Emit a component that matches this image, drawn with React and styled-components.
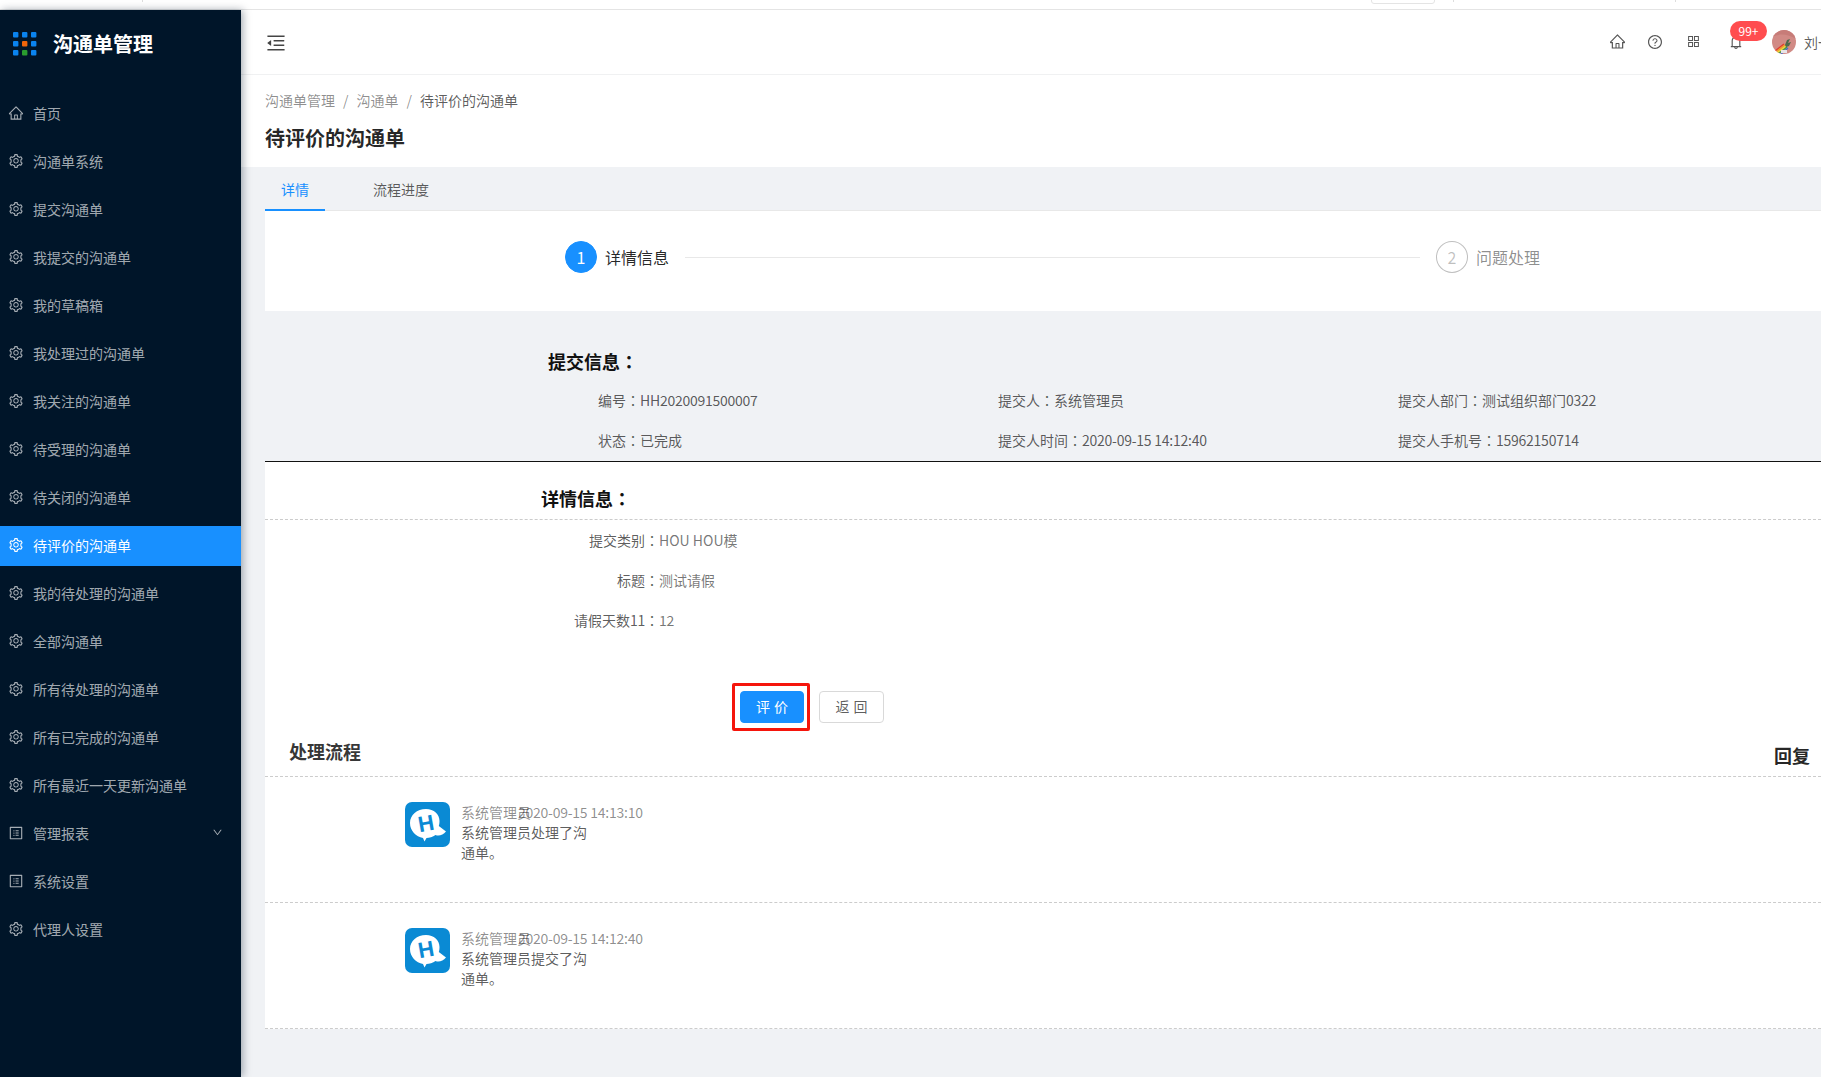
import React from 'react';
import styled, { createGlobalStyle } from 'styled-components';
import {
  AiOutlineHome, AiOutlineSetting, AiOutlineProfile, AiOutlineQuestionCircle,
  AiOutlineAppstore, AiOutlineBell, AiOutlineMenuFold, AiOutlineDown,
} from 'react-icons/ai';

const Global = createGlobalStyle`
  html, body { margin: 0; padding: 0; width: 1821px; height: 1077px; overflow: hidden; background: #f0f2f5; }
  body { font-family: "Noto Sans CJK SC", "Liberation Sans", sans-serif; font-size: 14px; color: rgba(0,0,0,.65); }
  * { box-sizing: border-box; }
`;

const Page = styled.div`
  width: 1821px; height: 1077px; display: flex; flex-direction: column; overflow: hidden;
`;
const TopStrip = styled.div`
  height: 10px; flex: none; background: #fff; border-bottom: 1px solid #e4e4e4; position: relative;
`;
const StripTick = styled.span`
  position: absolute; top: 0; left: ${p => p.$x}px; width: 1px; height: 2px; background: #ddd;
`;
const StripBox = styled.span`
  position: absolute; top: -6px; left: 1371px; width: 64px; height: 10px;
  border: 1px solid #e4e4e4; border-radius: 3px;
`;
const Body = styled.div`flex: 1; display: flex; min-height: 0;`;

const Sidebar = styled.aside`
  width: 241px; flex: none; background: #001529; box-shadow: 2px 0 8px rgba(0,21,41,.35); position: relative; z-index: 2;
`;
const Brand = styled.div`
  height: 68px; display: flex; align-items: center; gap: 16px; padding-left: 13px; margin-bottom: 16px;
`;
const BrandName = styled.div`
  font-size: 20px; font-weight: 700; color: #fff; line-height: 28px;
`;
const Menu = styled.nav`display: flex; flex-direction: column; gap: 8px;`;
const Item = styled.div`
  height: 40px; display: flex; align-items: center; padding: 0 18px 3px 8px; gap: 9px;
  color: ${p => (p.$active ? '#fff' : 'rgba(255,255,255,.65)')};
  background: ${p => (p.$active ? '#1890ff' : 'transparent')};
  font-size: 14px; svg { flex: none; }
`;
const ItemLabel = styled.span`flex: 1; white-space: nowrap;`;

const Main = styled.main`flex: 1; min-width: 0; display: flex; flex-direction: column;`;
const Header = styled.header`
  height: 65px; flex: none; background: #fff; border-bottom: 1px solid #f0f1f2;
  display: flex; align-items: center; padding-left: 24px; padding-bottom: 1px;
  color: #444;
`;
const FoldWrap = styled.span`display: flex; padding-top: 2px;`;
const HeaderTools = styled.div`
  margin-left: auto; display: flex; align-items: center; height: 100%; width: 223px; flex: none; overflow: hidden;
`;
const Tool = styled.span`
  width: ${p => p.$w || 38}px; display: flex; justify-content: center; color: #555; flex: none;
`;
const BellTool = styled(Tool)`position: relative;`;
const Badge = styled.span`
  position: absolute; left: 18px; top: -13px; height: 20px; width: 37px; border-radius: 10px;
  background: #ff4d4f; color: #fff; font-size: 12px; line-height: 20px; text-align: center;
`;
const AvatarSlot = styled.span`margin-left: 12px; display: flex; flex: none;`;
const UserName = styled.span`margin-left: 8px; white-space: nowrap; color: rgba(0,0,0,.65);`;

const PageHead = styled.div`
  height: 92px; flex: none; background: #fff; padding: 14px 0 0 24px;
`;
const Crumbs = styled.div`
  display: flex; height: 22px; line-height: 22px; color: rgba(0,0,0,.45);
`;
const CrumbSep = styled.span`margin: 0 8px; width: 5.500px; text-align: center;`;
const CrumbLast = styled.span`color: rgba(0,0,0,.65);`;
const Title = styled.h1`
  margin: 13px 0 0; font-size: 20px; font-weight: 700; line-height: 28px; color: rgba(0,0,0,.85);
`;

const Content = styled.div`flex: 1; padding-left: 24px;`;
const Tabs = styled.div`
  height: 44px; display: flex; border-bottom: 1px solid #e8e8e8; gap: 32px;
`;
const Tab = styled.div`
  padding: 0 16px; height: 44px; line-height: 45px; white-space: nowrap;
  color: ${p => (p.$active ? '#1890ff' : 'rgba(0,0,0,.65)')};
  border-bottom: 2px solid ${p => (p.$active ? '#1890ff' : 'transparent')};
`;
const Steps = styled.div`
  height: 100px; background: #fff; display: flex; align-items: center; padding: 0 281px 8px 300px;
`;
const StepDot = styled.span`
  width: 32px; height: 32px; border-radius: 50%; flex: none; font-size: 16px; line-height: 30px; text-align: center;
  border: 1px solid ${p => (p.$on ? '#1890ff' : 'rgba(0,0,0,.25)')};
  background: ${p => (p.$on ? '#1890ff' : '#fff')};
  color: ${p => (p.$on ? '#fff' : 'rgba(0,0,0,.25)')};
`;
const StepText = styled.span`
  font-size: 16px; margin-left: 8px; white-space: nowrap; color: ${p => (p.$on ? 'rgba(0,0,0,.85)' : 'rgba(0,0,0,.45)')};
`;
const StepLine = styled.span`flex: 1; height: 1px; background: #e8e8e8; margin: 0 16px;`;

const SubmitInfo = styled.section`
  height: 151px; border-bottom: 1px solid #111; padding-top: 35px;
`;
const SectionTitle = styled.h3`
  margin: 0 0 0 ${p => p.$left}px; font-size: 18px; font-weight: 700; color: #111; line-height: 30px;
`;
const InfoGrid = styled.div`
  display: grid; grid-template-columns: repeat(3, 400px); grid-auto-rows: 40px; margin: 4px 0 0 333px;
  align-items: center; white-space: nowrap;
`;
/* The reference centres its full-width colons in their cell, as the TC face does. */
const Colon = styled.span`font-family: "Noto Sans CJK TC", sans-serif;`;
const Num = styled.span`letter-spacing: -.25px;`;

const Detail = styled.section`background: #fff; height: 567px;`;
const DetailHead = styled.div`
  height: 58px; padding-top: 21px; border-bottom: 1px dashed #ccc;
`;
const DetailRow = styled.div`display: flex; height: 40px; align-items: center;`;
const DetailLabel = styled.span`width: 394px; text-align: right; white-space: nowrap;`;
const DetailValue = styled.span`color: rgba(0,0,0,.55);`;

const Actions = styled.div`
  display: flex; align-items: center; gap: 9px; margin: 43px 0 0 467px;
`;
const Highlight = styled.div`
  width: 78px; height: 48px; border: 3px solid #f5150c; border-radius: 2px; padding: 5px; flex: none;
`;
const Btn = styled.button`
  font-family: inherit; font-size: 14px; height: 32px; width: ${p => (p.$primary ? '64px' : '65px')}; padding: 0 0 2px; letter-spacing: 4px; text-indent: 4px;
  border-radius: 4px; border: 1px solid ${p => (p.$primary ? '#1890ff' : '#d9d9d9')};
  background: ${p => (p.$primary ? '#1890ff' : '#fff')};
  color: ${p => (p.$primary ? '#fff' : 'rgba(0,0,0,.65)')};
`;
const FlowHead = styled.div`
  height: 46px; display: flex; justify-content: space-between; padding: 5px 11px 0 24px;
  border-bottom: 1px dashed #ccc;
`;
const FlowTitle = styled.div`font-size: 18px; font-weight: 700; color: rgba(0,0,0,.8); line-height: 30px;`;
const FlowReply = styled.div`font-size: 18px; font-weight: 700; color: rgba(0,0,0,.85); line-height: 30px; padding-top: 4px;`;
const FlowItem = styled.div`
  height: 126px; display: flex; gap: 11px; padding: 25px 0 0 140px; border-bottom: 1px dashed #ccc;
`;
const FlowText = styled.div`width: 126px; line-height: 20px;`;
const FlowMeta = styled.div`display: flex; white-space: nowrap; color: rgba(0,0,0,.45); font-size: 14px;`;
const FlowName = styled.span`width: 57px; flex: none;`;
const FlowBody = styled.div`color: rgba(0,0,0,.65);`;

const BrandDots = () => {
  const colors = ['#0a84f0','#0a84f0','#0a84f0','#0a84f0','#f0650a','#0a84f0','#0a84f0','#2a9d2f','#0a84f0'];
  return (
    <svg width="24" height="24" viewBox="0 0 24 24">
      {colors.map((c, i) => (
        <rect key={i} x={(i % 3) * 9} y={Math.floor(i / 3) * 9} width="5.4" height="5.4" rx="1" fill={c} />
      ))}
    </svg>
  );
};

const Avatar = () => (
  <svg width="24" height="24" viewBox="0 0 24 24">
    <defs><clipPath id="av"><circle cx="12" cy="12" r="12" /></clipPath></defs>
    <g clipPath="url(#av)">
      <rect width="24" height="24" fill="#d18a85" />
      <path d="M0 7 C8 3 16 4 24 9 V0 H0Z" fill="#c77c78" />
      <path d="M3 21 L12 14" stroke="#e23b2e" strokeWidth="1.3" />
      <path d="M4 22 L13 15" stroke="#f0a020" strokeWidth="1.3" />
      <path d="M5 23 L14 16" stroke="#f2e030" strokeWidth="1.3" />
      <path d="M6 24 L15 17" stroke="#3aa04a" strokeWidth="1.3" />
      <path d="M8 25 L16 18" stroke="#3a6fd0" strokeWidth="1.3" />
      <path d="M13 15 L15 10 L18 9 L16 13 L19 12 L17 16 L14 17Z" fill="#4c6a4c" />
      <rect x="9" y="20" width="6" height="3" fill="#e8e4e8" />
    </g>
  </svg>
);

const LogoH = () => (
  <svg width="45" height="45" viewBox="0 0 45 45" style={{ flex: 'none' }}>
    <rect width="45" height="45" rx="7" fill="#0a8ad4" />
    <path d="M21 7 C29 7 34.500 12 34.500 19 C34.500 21 34.200 23 33.800 24 L41 29.500 C38 33 34 34.500 30.500 33 C28 35 24 36 21.500 36 L19.500 39.500 L18 36 C11 34.500 5 29 5 21 C5 13 12 7 21 7Z" fill="#fff" />
    <text x="21" y="29" fontFamily="Liberation Sans, sans-serif" fontSize="22" fontWeight="700" fill="#0a8ad4" textAnchor="middle" transform="rotate(-10 21 21)">H</text>
  </svg>
);

const menu = [
  ['首页', 'home'], ['沟通单系统'], ['提交沟通单'], ['我提交的沟通单'], ['我的草稿箱'],
  ['我处理过的沟通单'], ['我关注的沟通单'], ['待受理的沟通单'], ['待关闭的沟通单'],
  ['待评价的沟通单', 'set', true], ['我的待处理的沟通单'], ['全部沟通单'], ['所有待处理的沟通单'],
  ['所有已完成的沟通单'], ['所有最近一天更新沟通单'], ['管理报表', 'profile', false, true],
  ['系统设置', 'profile'], ['代理人设置'],
];
const icons = { home: AiOutlineHome, profile: AiOutlineProfile, set: AiOutlineSetting };

const flows = [
  ['2020-09-15 14:13:10', '系统管理员处理了沟通单。'],
  ['2020-09-15 14:12:40', '系统管理员提交了沟通单。'],
];

export default function App() {
  return (
    <Page>
      <Global />
      <TopStrip>
        <StripTick $x={142} />
        <StripBox />
        <StripTick $x={1453} />
        <StripTick $x={1675} />
      </TopStrip>
      <Body>
        <Sidebar>
          <Brand>
            <BrandDots />
            <BrandName>沟通单管理</BrandName>
          </Brand>
          <Menu>
            {menu.map(([label, icon, active, arrow]) => {
              const I = icons[icon] || AiOutlineSetting;
              return (
                <Item key={label} $active={active}>
                  <I size={16} />
                  <ItemLabel>{label}</ItemLabel>
                  {arrow && <AiOutlineDown size={11} />}
                </Item>
              );
            })}
          </Menu>
        </Sidebar>
        <Main>
          <Header>
            <FoldWrap><AiOutlineMenuFold size={22} /></FoldWrap>
            <HeaderTools>
              <Tool><AiOutlineHome size={17} /></Tool>
              <Tool><AiOutlineQuestionCircle size={16} /></Tool>
              <Tool><AiOutlineAppstore size={15} /></Tool>
              <BellTool $w={48}><AiOutlineBell size={16} /><Badge>99+</Badge></BellTool>
              <AvatarSlot><Avatar /></AvatarSlot>
              <UserName>刘一</UserName>
            </HeaderTools>
          </Header>
          <PageHead>
            <Crumbs>
              <span>沟通单管理</span><CrumbSep>/</CrumbSep>
              <span>沟通单</span><CrumbSep>/</CrumbSep>
              <CrumbLast>待评价的沟通单</CrumbLast>
            </Crumbs>
            <Title>待评价的沟通单</Title>
          </PageHead>
          <Content>
            <Tabs>
              <Tab $active>详情</Tab>
              <Tab>流程进度</Tab>
            </Tabs>
            <Steps>
              <StepDot $on>1</StepDot>
              <StepText $on>详情信息</StepText>
              <StepLine />
              <StepDot>2</StepDot>
              <StepText>问题处理</StepText>
            </Steps>
            <SubmitInfo>
              <SectionTitle $left={283}>提交信息<Colon>：</Colon></SectionTitle>
              <InfoGrid>
                <span>编号<Colon>：</Colon><Num>HH2020091500007</Num></span>
                <span>提交人<Colon>：</Colon>系统管理员</span>
                <span>提交人部门<Colon>：</Colon>测试组织部门<Num>0322</Num></span>
                <span>状态<Colon>：</Colon>已完成</span>
                <span>提交人时间<Colon>：</Colon><Num>2020-09-15 14:12:40</Num></span>
                <span>提交人手机号<Colon>：</Colon><Num>15962150714</Num></span>
              </InfoGrid>
            </SubmitInfo>
            <Detail>
              <DetailHead><SectionTitle $left={276}>详情信息<Colon>：</Colon></SectionTitle></DetailHead>
              <DetailRow><DetailLabel>提交类别<Colon>：</Colon></DetailLabel><DetailValue>HOU HOU模</DetailValue></DetailRow>
              <DetailRow><DetailLabel>标题<Colon>：</Colon></DetailLabel><DetailValue>测试请假</DetailValue></DetailRow>
              <DetailRow><DetailLabel>请假天数<Num>11</Num><Colon>：</Colon></DetailLabel><DetailValue><Num>12</Num></DetailValue></DetailRow>
              <Actions>
                <Highlight><Btn $primary>评价</Btn></Highlight>
                <Btn>返回</Btn>
              </Actions>
              <FlowHead>
                <FlowTitle>处理流程</FlowTitle>
                <FlowReply>回复</FlowReply>
              </FlowHead>
              {flows.map(([time, text]) => (
                <FlowItem key={time}>
                  <LogoH />
                  <FlowText>
                    <FlowMeta><FlowName>系统管理员</FlowName><Num>{time}</Num></FlowMeta>
                    <FlowBody>{text}</FlowBody>
                  </FlowText>
                </FlowItem>
              ))}
            </Detail>
          </Content>
        </Main>
      </Body>
    </Page>
  );
}
